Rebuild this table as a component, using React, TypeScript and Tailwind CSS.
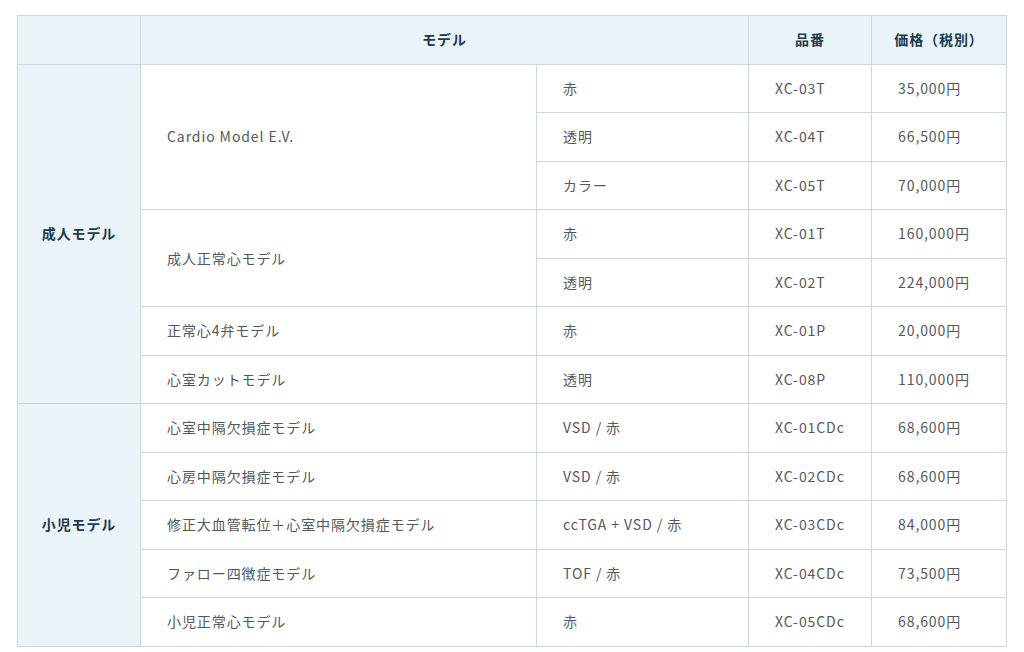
import React from "react";

const F = { fontFamily: '"Noto Sans CJK JP", "Noto Sans", sans-serif' };

type Row = { cat?: { label: string; span: number }; model?: { label: string; span: number }; color: string; code: string; price: string };

const rows: Row[] = [
  { cat: { label: "成人モデル", span: 7 }, model: { label: "Cardio Model E.V.", span: 3 }, color: "赤", code: "XC-03T", price: "35,000円" },
  { color: "透明", code: "XC-04T", price: "66,500円" },
  { color: "カラー", code: "XC-05T", price: "70,000円" },
  { model: { label: "成人正常心モデル", span: 2 }, color: "赤", code: "XC-01T", price: "160,000円" },
  { color: "透明", code: "XC-02T", price: "224,000円" },
  { model: { label: "正常心4弁モデル", span: 1 }, color: "赤", code: "XC-01P", price: "20,000円" },
  { model: { label: "心室カットモデル", span: 1 }, color: "透明", code: "XC-08P", price: "110,000円" },
  { cat: { label: "小児モデル", span: 5 }, model: { label: "心室中隔欠損症モデル", span: 1 }, color: "VSD / 赤", code: "XC-01CDc", price: "68,600円" },
  { model: { label: "心房中隔欠損症モデル", span: 1 }, color: "VSD / 赤", code: "XC-02CDc", price: "68,600円" },
  { model: { label: "修正大血管転位＋心室中隔欠損症モデル", span: 1 }, color: "ccTGA + VSD / 赤", code: "XC-03CDc", price: "84,000円" },
  { model: { label: "ファロー四徴症モデル", span: 1 }, color: "TOF / 赤", code: "XC-04CDc", price: "73,500円" },
  { model: { label: "小児正常心モデル", span: 1 }, color: "赤", code: "XC-05CDc", price: "68,600円" },
];

const td = "border border-[#cdd8de] px-[26px] text-left align-middle";
const th = "border border-[#cdd8de] bg-[#eaf3f7] text-[#1c3a50] font-bold text-center align-middle";

export default function App() {
  return (
    <div className="bg-white w-[1024px] h-[652px] pt-[15px] pl-[17px]" style={F}>
      <table className="border-collapse table-fixed w-[989px] text-[14px] tracking-[0.065em] text-[#53585c]">
        <colgroup>
          <col className="w-[123px]" />
          <col className="w-[396px]" />
          <col className="w-[212px]" />
          <col className="w-[123px]" />
          <col className="w-[135px]" />
        </colgroup>
        <thead>
          <tr className="h-[48.5px]">
            <th className={th}></th>
            <th className={th} colSpan={2}>モデル</th>
            <th className={th}>品番</th>
            <th className={th}>価格（税別）</th>
          </tr>
        </thead>
        <tbody>
          {rows.map((r, i) => (
            <tr key={i} className="h-[48.5px]">
              {r.cat && (
                <td rowSpan={r.cat.span} className={th}>{r.cat.label}</td>
              )}
              {r.model && (
                <td rowSpan={r.model.span} className={td}>{r.model.label}</td>
              )}
              <td className={td}>{r.color}</td>
              <td className={td}>{r.code}</td>
              <td className={td}>{r.price}</td>
            </tr>
          ))}
        </tbody>
      </table>
    </div>
  );
}
